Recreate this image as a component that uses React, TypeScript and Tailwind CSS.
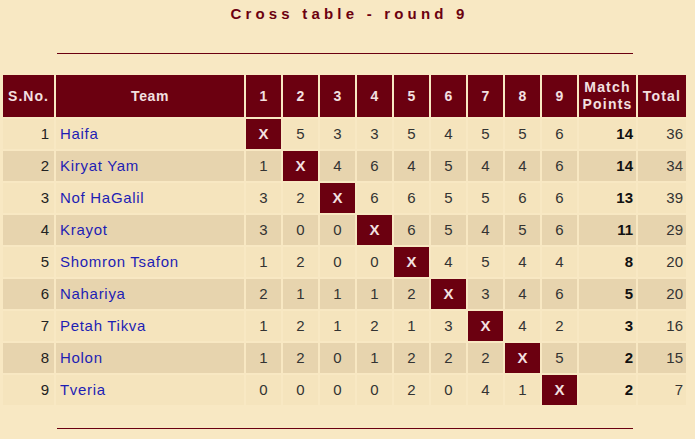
import React from "react";

const teams = [
  "Haifa",
  "Kiryat Yam",
  "Nof HaGalil",
  "Krayot",
  "Shomron Tsafon",
  "Nahariya",
  "Petah Tikva",
  "Holon",
  "Tveria",
];

const grid: (number | null)[][] = [
  [null, 5, 3, 3, 5, 4, 5, 5, 6],
  [1, null, 4, 6, 4, 5, 4, 4, 6],
  [3, 2, null, 6, 6, 5, 5, 6, 6],
  [3, 0, 0, null, 6, 5, 4, 5, 6],
  [1, 2, 0, 0, null, 4, 5, 4, 4],
  [2, 1, 1, 1, 2, null, 3, 4, 6],
  [1, 2, 1, 2, 1, 3, null, 4, 2],
  [1, 2, 0, 1, 2, 2, 2, null, 5],
  [0, 0, 0, 0, 2, 0, 4, 1, null],
];

const mp = [14, 14, 13, 11, 8, 5, 3, 2, 2];
const total = [36, 34, 39, 29, 20, 20, 16, 15, 7];

export default function App() {
  return (
    <div
      className="w-[695px] h-[439px] bg-[#f8e8c3] overflow-hidden"
      style={{ fontFamily: '"Liberation Sans", Arial, sans-serif' }}
    >
      <div className="h-[28px] flex items-center justify-center">
        <span className="text-[15px] leading-[18px] font-bold tracking-[4.2px] text-[#6b0010] pl-[4px]">
          Cross table - round 9
        </span>
      </div>
      <div className="mt-[25px] ml-[57px] w-[576px] h-[1px] bg-[#6b0010]" />
      <div className="mt-[21px] ml-[3px] grid grid-cols-[51px_188px_repeat(9,35px)_57px_48px] gap-[2px]">
        {/* header */}
        <div className="h-[42px] bg-[#6b0010] text-[#f3e0e0] font-bold text-[14px] flex items-center justify-center tracking-[1px]">
          S.No.
        </div>
        <div className="h-[42px] bg-[#6b0010] text-[#f3e0e0] font-bold text-[14px] flex items-center justify-center tracking-[0.6px]">
          Team
        </div>
        {[1, 2, 3, 4, 5, 6, 7, 8, 9].map((n) => (
          <div
            key={n}
            className="h-[42px] bg-[#6b0010] text-[#f3e0e0] font-bold text-[14px] flex items-center justify-center"
          >
            {n}
          </div>
        ))}
        <div className="h-[42px] bg-[#6b0010] text-[#f3e0e0] font-bold text-[14px] leading-[17px] flex items-center justify-center text-center tracking-[1.2px]">
          Match
          <br />
          Points
        </div>
        <div className="h-[42px] bg-[#6b0010] text-[#f3e0e0] font-bold text-[14px] flex items-center justify-center tracking-[1.2px]">
          Total
        </div>

        {teams.map((t, i) => {
          const bg = i % 2 === 0 ? "bg-[#f5e4bd]" : "bg-[#e7d4ae]";
          return (
            <React.Fragment key={t}>
              <div className={`h-[30px] ${bg} text-[#222] text-[15px] flex items-center justify-end pr-[5px]`}>
                {i + 1}
              </div>
              <div className={`h-[30px] ${bg} text-[#1e1eb4] text-[15px] flex items-center pl-[4px] tracking-[0.7px]`}>
                {t}
              </div>
              {grid[i].map((v, j) =>
                v === null ? (
                  <div
                    key={j}
                    className="h-[30px] bg-[#6b0010] text-[#f3e0e0] font-bold text-[15px] flex items-center justify-center"
                  >
                    X
                  </div>
                ) : (
                  <div
                    key={j}
                    className={`h-[30px] ${bg} text-[#333] text-[15px] flex items-center justify-center`}
                  >
                    {v}
                  </div>
                )
              )}
              <div className={`h-[30px] ${bg} text-[#111] font-bold text-[15px] flex items-center justify-end pr-[3px]`}>
                {mp[i]}
              </div>
              <div className={`h-[30px] ${bg} text-[#333] text-[15px] flex items-center justify-end pr-[3px]`}>
                {total[i]}
              </div>
            </React.Fragment>
          );
        })}
      </div>
      <div className="mt-[23px] ml-[57px] w-[576px] h-[1px] bg-[#6b0010]" />
    </div>
  );
}
